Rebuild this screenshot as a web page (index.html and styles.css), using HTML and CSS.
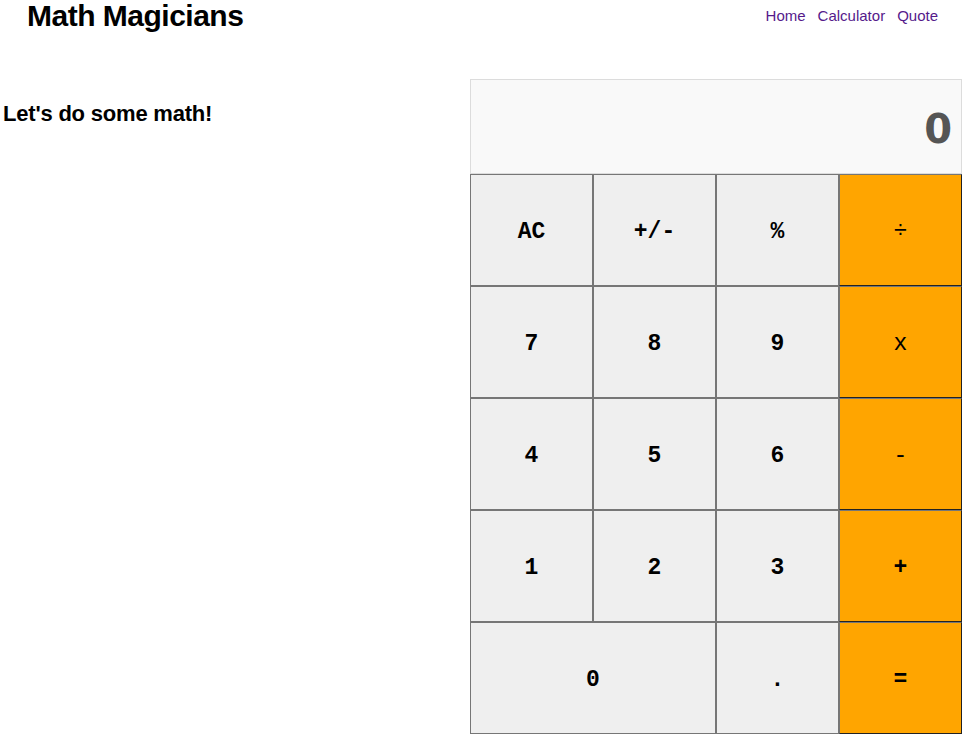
FILE: index.html
```html
<!DOCTYPE html>
<html lang="en">
<head>
<meta charset="utf-8">
<title>Math Magicians</title>
<link rel="stylesheet" href="styles.css">
</head>
<body>
<header class="header">
  <h1 class="logo">Math Magicians</h1>
  <nav class="nav">
    <a href="#" class="nav-link">Home</a>
    <a href="#" class="nav-link">Calculator</a>
    <a href="#" class="nav-link">Quote</a>
  </nav>
</header>
<main class="main">
  <h2 class="intro">Let's do some math!</h2>
  <div class="calc">
    <div class="display">0</div>
    <button class="key">AC</button>
    <button class="key">+/-</button>
    <button class="key">%</button>
    <button class="key op thin">÷</button>
    <button class="key">7</button>
    <button class="key">8</button>
    <button class="key">9</button>
    <button class="key op thin">x</button>
    <button class="key">4</button>
    <button class="key">5</button>
    <button class="key">6</button>
    <button class="key op thin">-</button>
    <button class="key">1</button>
    <button class="key">2</button>
    <button class="key">3</button>
    <button class="key op">+</button>
    <button class="key zero">0</button>
    <button class="key">.</button>
    <button class="key op">=</button>
  </div>
</main>
</body>
</html>
```
FILE: styles.css
```css
body {
  margin: 0;
  font-family: "Liberation Sans", Arial, sans-serif;
  color: #000;
  background: #fff;
}

.header {
  display: flex;
  justify-content: space-between;
  align-items: center;
  height: 31px;
  padding: 0 26px 0 27px;
}

.logo {
  margin: 0;
  font-size: 30px;
  font-weight: bold;
  letter-spacing: -0.5px;
}

.nav {
  display: flex;
  gap: 12px;
  font-size: 15px;
  margin-left: -2px;
}

.nav-link {
  color: #551a8b;
  text-decoration: none;
}

.main {
  display: flex;
  justify-content: space-between;
  align-items: flex-start;
  margin-top: 48px;
  padding: 0 2px 0 3px;
}

.intro {
  margin: 22px 0 0;
  font-size: 22px;
  font-weight: bold;
  letter-spacing: -0.2px;
}

.calc {
  width: 492px;
  display: grid;
  grid-template-columns: repeat(4, 123px);
  grid-template-rows: 95px repeat(5, 112px);
}

.display {
  grid-column: 1 / -1;
  box-sizing: border-box;
  border: 1px solid #dcdcdc;
  background: #f9f9f9;
  display: flex;
  align-items: center;
  justify-content: flex-end;
  padding: 4px 9px 0 0;
  font-family: "DejaVu Sans", Verdana, sans-serif;
  font-weight: bold;
  font-size: 40px;
  color: #555;
}

.key {
  margin: 0;
  padding: 4px 0 0;
  border: 1px solid #767676;
  background: #efefef;
  font-family: "Liberation Mono", "Courier New", monospace;
  font-weight: bold;
  font-size: 23px;
  color: #000;
}

.op {
  background: #ffa500;
  border-color: #767676 #222 #222 #767676;
}

.thin {
  font-weight: normal;
}

.zero {
  grid-column: span 2;
}
```
